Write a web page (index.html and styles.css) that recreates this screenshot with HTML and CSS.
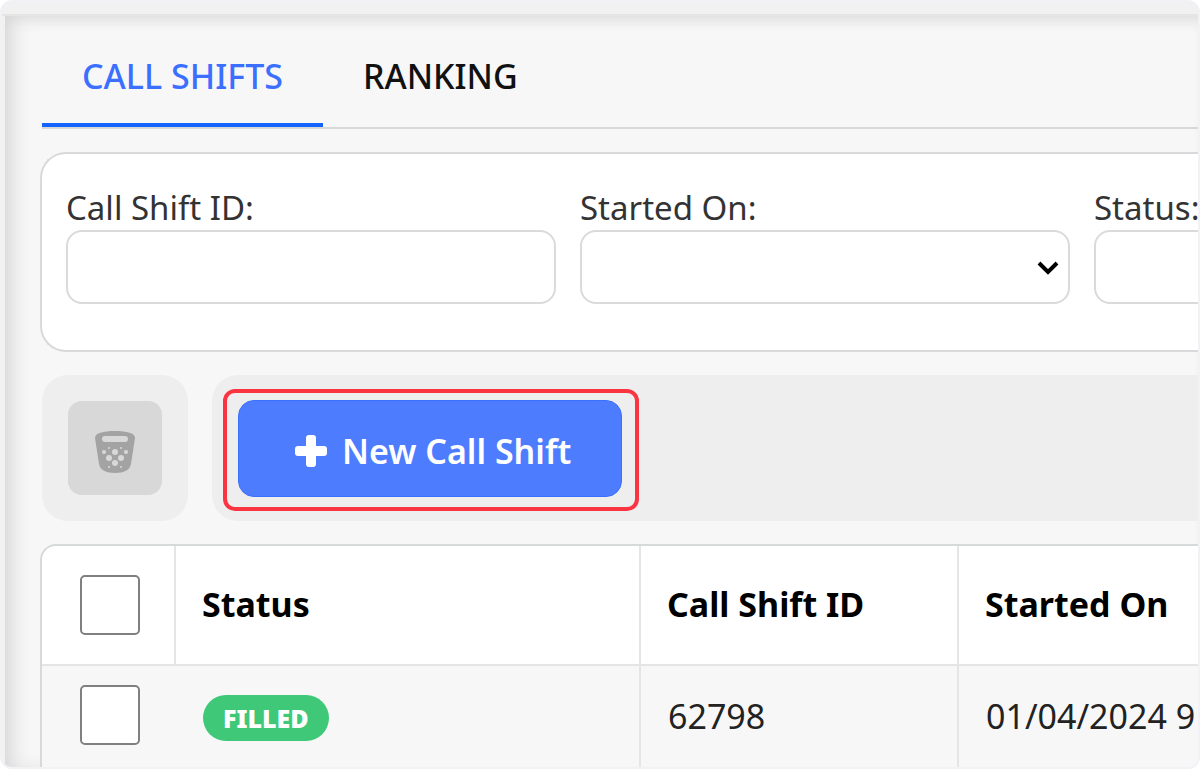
FILE: index.html
```
<!DOCTYPE html>
<html lang="en">

<head>
    <meta charset="UTF-8">
    <meta name="viewport" content="width=device-width, initial-scale=1.0">
    <title>Call Shifts</title>
    <link rel="stylesheet" href="styles.css">
</head>

<body>
    <div class="window">
        <header class="top-bar"></header>

        <main class="panel">
            <nav class="tabs">
                <a class="tab active" href="#shifts">CALL SHIFTS</a>
                <a class="tab" href="#ranking">RANKING</a>
            </nav>

            <form class="filters">
                <div class="field">
                    <label for="shift-id">Call Shift ID:</label>
                    <input type="text" id="shift-id">
                </div>
                <div class="field">
                    <label for="started-on">Started On:</label>
                    <div class="select-wrap">
                        <select id="started-on">
                            <option></option>
                        </select>
                        <svg class="chevron" viewBox="0 0 24 16" aria-hidden="true">
                            <path d="M3 3l9 9 9-9" fill="none" stroke="#000" stroke-width="4" />
                        </svg>
                    </div>
                </div>
                <div class="field">
                    <label for="status">Status:</label>
                    <input type="text" id="status">
                </div>
            </form>

            <div class="toolbar">
                <div class="tool-group">
                    <button class="delete-btn" type="button" aria-label="Delete" disabled>
                        <svg viewBox="0 0 40 42" aria-hidden="true">
                            <path d="M0 7C0 2 8 0 20 0s20 2 20 7l-4 26c-1 6-7 9-16 9S5 39 4 33z" fill="#a3a3a3" />
                            <rect x="7" y="5" width="26" height="6" rx="3" fill="#d8d8d8" />
                            <g fill="#d8d8d8">
                                <circle cx="9" cy="21" r="2" />
                                <circle cx="20" cy="21" r="3" />
                                <circle cx="31" cy="21" r="2" />
                                <circle cx="14" cy="27" r="3" />
                                <circle cx="26" cy="27" r="3" />
                                <circle cx="20" cy="32" r="3" />
                                <circle cx="14" cy="17" r="1" />
                                <circle cx="26" cy="17" r="1" />
                                <circle cx="14" cy="36" r="1" />
                                <circle cx="26" cy="36" r="1" />
                            </g>
                        </svg>
                    </button>
                </div>
                <div class="tool-group actions">
                    <div class="highlight">
                        <button class="new-btn" type="button">
                            <svg viewBox="0 0 32 32" aria-hidden="true">
                                <path d="M14 0h4q3 0 3 3v8h8q3 0 3 3v4q0 3-3 3h-8v8q0 3-3 3h-4q-3 0-3-3v-8H3q-3 0-3-3v-4q0-3 3-3h8V3q0-3 3-3z" fill="#fff" />
                            </svg>
                            New Call Shift
                        </button>
                    </div>
                </div>
            </div>

            <div class="table-box">
                <table>
                    <thead>
                        <tr>
                            <th class="col-check"><input type="checkbox" aria-label="Select all"></th>
                            <th class="col-status">Status</th>
                            <th class="col-id">Call Shift ID</th>
                            <th class="col-start">Started On</th>
                        </tr>
                    </thead>
                    <tbody>
                        <tr>
                            <td class="col-check"><input type="checkbox" aria-label="Select shift 62798"></td>
                            <td><span class="badge">FILLED</span></td>
                            <td>62798</td>
                            <td>01/04/2024 9</td>
                        </tr>
                    </tbody>
                </table>
            </div>
        </main>
    </div>
</body>

</html>
```

FILE: styles.css
```
* {
    box-sizing: border-box;
    margin: 0;
    padding: 0;
}

body {
    background: #fff;
    color: #333;
    font-family: 'Noto Sans', 'Open Sans', sans-serif;
    font-size: 33px;
}

.window {
    display: flex;
    flex-direction: column;
    height: 100vh;
    border: 2px solid #f1f1f6;
    border-radius: 12px;
    background: #f1f1f1;
    overflow: hidden;
}

.top-bar {
    flex: none;
    height: 14px;
    border-bottom: 2px solid #e5e5e5;
}

.panel {
    flex: 1;
    min-height: 0;
    margin-left: 3px;
    padding-left: 35px;
    background: #f7f7f7;
    box-shadow: inset 12px 0 20px -6px #d4d4d4, inset 0 12px 14px -8px #e4e4e4;
    clip-path: inset(0);
}

/* Tabs */
.tabs {
    display: flex;
    height: 113px;
    margin-left: 2px;
    border-bottom: 2px solid #d8d8d8;
}

.tab {
    padding: 36px 40px 0;
    border-bottom: 4px solid transparent;
    color: #111;
    font-size: 34px;
    font-weight: 500;
    line-height: 48px;
    text-decoration: none;
}

.tab.active {
    border-bottom-color: #1563ff;
    color: #3b70ff;
}

/* Filters */
.filters {
    display: flex;
    gap: 24px;
    margin-top: 23px;
    padding: 32px 0 46px 24px;
    border: 2px solid #d7d9db;
    border-right: none;
    border-radius: 26px 0 0 26px;
    background: #fff;
    overflow: hidden;
}

.field {
    flex: none;
    width: 490px;
}

.field label {
    display: block;
    line-height: 44px;
    white-space: nowrap;
}

.field input,
.field select {
    display: block;
    width: 100%;
    height: 74px;
    padding: 0 16px;
    border: 2px solid #dadada;
    border-radius: 16px;
    background: #fff;
    font: inherit;
    appearance: none;
}

.select-wrap {
    position: relative;
}

.chevron {
    position: absolute;
    top: 30px;
    right: 10px;
    width: 24px;
    height: 16px;
    pointer-events: none;
}

/* Toolbar */
.toolbar {
    display: flex;
    gap: 24px;
    margin: 23px 0 23px 2px;
}

.tool-group {
    padding: 26px;
    border-radius: 26px;
    background: #eee;
}

.tool-group.actions {
    flex: 1;
    padding: 14px 11px 10px;
    border-radius: 26px 0 0 26px;
}

.delete-btn {
    display: flex;
    align-items: center;
    justify-content: center;
    width: 94px;
    height: 94px;
    padding-top: 8px;
    border: none;
    border-radius: 14px;
    background: #d8d8d8;
}

.delete-btn svg {
    width: 40px;
    height: 42px;
}

.highlight {
    width: fit-content;
    padding: 7px 13px 10px 11px;
    border: 4px solid #fa3441;
    border-radius: 12px;
}

.new-btn {
    display: flex;
    align-items: center;
    gap: 15px;
    height: 97px;
    padding: 4px 50px 0 56px;
    border: 1px solid #3b70ff;
    border-radius: 16px;
    background: #4e7cff;
    color: #fff;
    font: inherit;
    font-size: 34px;
    font-weight: 600;
}

.new-btn svg {
    width: 32px;
    height: 32px;
}

/* Table */
.table-box {
    border: 2px solid #d7dada;
    border-right: none;
    border-radius: 16px 0 0 0;
    background: #fff;
    overflow: hidden;
}

table {
    width: 1300px;
    border-collapse: separate;
    border-spacing: 0;
    table-layout: fixed;
    color: #222;
    font-size: 34px;
}

th,
td {
    padding-left: 26px;
    border-right: 2px solid #e4e5e5;
    text-align: left;
    white-space: nowrap;
}

th {
    height: 120px;
    padding-bottom: 2px;
    border-bottom: 2px solid #e4e5e5;
    color: #000;
    font-weight: 700;
}

td {
    height: 104px;
    padding-bottom: 4px;
    padding-left: 27px;
    background: #f7f7f7;
}

.col-check {
    width: 134px;
    padding-bottom: 0;
    padding-left: 38px;
}

td.col-check {
    padding-bottom: 6px;
    border-right-color: transparent;
}

.col-status {
    width: 465px;
}

.col-id {
    width: 318px;
}

input[type="checkbox"] {
    display: block;
    width: 60px;
    height: 60px;
    border: 2px solid #808080;
    border-radius: 5px;
    background: #fff;
    appearance: none;
}

.badge {
    display: inline-block;
    padding: 0 20px;
    border-radius: 23px;
    background: #3ec878;
    color: #fff;
    font-size: 25px;
    font-weight: 900;
    line-height: 46px;
    vertical-align: middle;
}
```
